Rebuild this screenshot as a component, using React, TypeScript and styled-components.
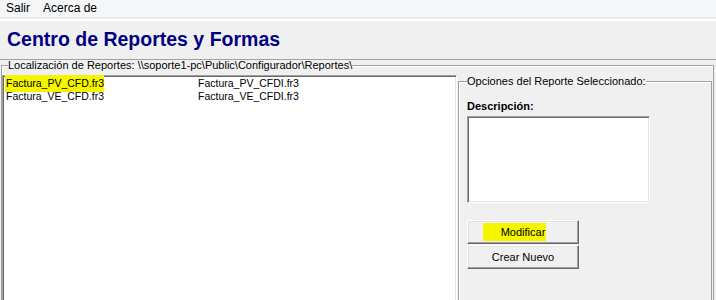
import React from "react";
import styled, { createGlobalStyle } from "styled-components";

const GlobalStyle = createGlobalStyle`
  html, body {
    margin: 0;
    padding: 0;
    background: #f0f0f0;
    overflow: hidden;
  }
  body {
    font-family: "Liberation Sans", Arial, sans-serif;
    font-size: 11px;
    color: #000;
  }
`;

const Window = styled.div`
  width: 716px;
  height: 300px;
  overflow: hidden;
  background: #f0f0f0;
`;

const MenuBar = styled.nav`
  display: flex;
  align-items: center;
  gap: 13px;
  height: 17px;
  padding-left: 6px;
  background: #f5f6f7;
  border-bottom: 1px solid #e6e6e6;
  font-size: 12px;
`;

const MenuItem = styled.span`
  line-height: 17px;
`;

const TitlePanel = styled.header`
  margin-top: 1px;
  height: 29px;
  padding: 7px 0 2px 7px;
  border-top: 2px solid #fff;
  border-bottom: 1px solid #a0a0a0;
`;

const Title = styled.h1`
  margin: 0;
  font-size: 19.5px;
  line-height: 22px;
  font-weight: bold;
  color: #000080;
`;

const GroupBox = styled.fieldset<{ $top?: number }>`
  margin: ${(p) => p.$top ?? 0}px 0 0 0;
  padding: 0;
  min-width: 0;
  border: 1px solid #a0a0a0;
  box-shadow: inset 1px 1px #fff;
`;

const Legend = styled.legend<{ $indent: number }>`
  margin-left: ${(p) => p.$indent}px;
  padding: 0;
  font-size: 11px;
  line-height: 12px;
`;

const Outer = styled(GroupBox)`
  margin-left: 1px;
  margin-right: 2px;
  height: 300px;
`;

const Row = styled.div`
  display: flex;
  align-items: flex-start;
  gap: 1px;
  padding-top: 4px;
`;

const Sunken = styled.div`
  background: #fff;
  border: 1px solid;
  border-color: #a0a0a0 #fff #fff #a0a0a0;
  box-shadow: inset 1px 1px #696969, inset -1px -1px #e3e3e3;
`;

const ListBox = styled(Sunken)`
  box-sizing: border-box;
  width: 455px;
  height: 240px;
  padding: 1px 3px;
  display: grid;
  grid-template-columns: 192px 192px;
  grid-auto-rows: 13px;
  align-content: start;
`;

const Item = styled.div`
  font-size: 10.5px;
  line-height: 13px;
  white-space: nowrap;
`;

const Marked = styled.span`
  background: #f5f500;
  padding: 2px 0 3px 1px;
  margin-left: -1px;
`;

const Options = styled(GroupBox)`
  flex: 1;
  height: 240px;
  padding: 0 0 0 8px;
  margin-right: 1px;
`;

const Caption = styled.div`
  margin-top: 13px;
  font-weight: bold;
  font-size: 11px;
  line-height: 12px;
`;

const Memo = styled(Sunken)`
  margin-top: 4px;
  width: 181px;
  height: 85px;
`;

const Buttons = styled.div`
  display: flex;
  flex-direction: column;
  gap: 1px;
  margin-top: 17px;
`;

const Button = styled.button`
  width: 112px;
  height: 24px;
  padding: 0;
  background: #f0f0f0;
  border: 1px solid;
  border-color: #fff #696969 #696969 #fff;
  box-shadow: inset -1px -1px #a0a0a0, inset 1px 1px #e3e3e3;
  font-family: "Liberation Sans", Arial, sans-serif;
  font-size: 11px;
  color: #000;
  text-align: center;
`;

const ButtonMark = styled.span`
  display: inline-block;
  background: #f5f500;
  padding: 3px 1px 3px 18px;
  margin-left: -17px;
`;

const reports = [
  "Factura_PV_CFD.fr3",
  "Factura_PV_CFDI.fr3",
  "Factura_VE_CFD.fr3",
  "Factura_VE_CFDI.fr3",
];

export default function App() {
  return (
    <Window>
      <GlobalStyle />
      <MenuBar>
        <MenuItem>Salir</MenuItem>
        <MenuItem>Acerca de</MenuItem>
      </MenuBar>
      <TitlePanel>
        <Title>Centro de Reportes y Formas</Title>
      </TitlePanel>
      <Outer $top={-1}>
        <Legend $indent={6}>
          Localización de Reportes: \\soporte1-pc\Public\Configurador\Reportes\
        </Legend>
        <Row>
          <ListBox>
            {reports.map((r, i) => (
              <Item key={r}>{i === 0 ? <Marked>{r}</Marked> : r}</Item>
            ))}
          </ListBox>
          <Options $top={0}>
            <Legend $indent={0}>Opciones del Reporte Seleccionado:</Legend>
            <Caption>Descripción:</Caption>
            <Memo />
            <Buttons>
              <Button>
                <ButtonMark>Modificar</ButtonMark>
              </Button>
              <Button>Crear Nuevo</Button>
            </Buttons>
          </Options>
        </Row>
      </Outer>
    </Window>
  );
}
